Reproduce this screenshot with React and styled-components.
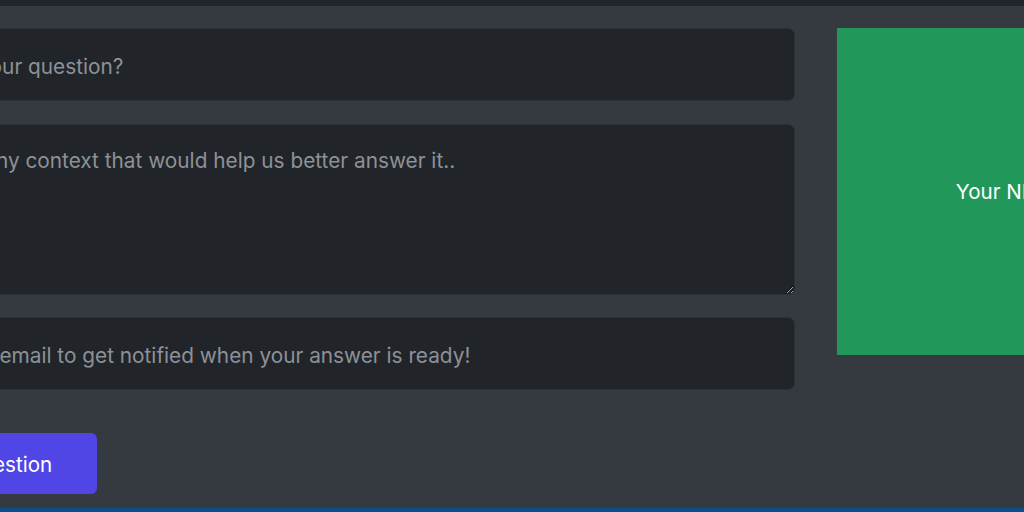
import styled, { createGlobalStyle } from "styled-components";

const GlobalStyle = createGlobalStyle`
  html, body {
    margin: 0;
    padding: 0;
    background: #343a40;
    overflow: hidden;
    font-family: Inter, "Noto Sans", sans-serif;
  }
`;

const Page = styled.div`
  width: 1024px;
  height: 512px;
  display: flex;
  flex-direction: column;
  background: #343a40;
`;

const TopBar = styled.div`
  height: 6px;
  background: #212529;
  flex-shrink: 0;
`;

const Main = styled.main`
  flex: 1;
  display: flex;
  gap: 42px;
  padding-top: 22px;
  /* page is scrolled sideways: the form starts left of the view */
  margin-left: -117px;
`;

const Form = styled.form`
  width: 912px;
  flex-shrink: 0;
  display: flex;
  flex-direction: column;
`;

const field = `
  box-sizing: border-box;
  width: 100%;
  background: #212529;
  border: 1px solid #2b3035;
  border-radius: 7px;
  color: #dee2e6;
  font-family: Inter, "Noto Sans", sans-serif;
  font-size: 20.8px;
  line-height: 1.5;
  padding: 0 20px;
  outline: none;
  &::placeholder {
    color: #8d9198;
  }
`;

const Input = styled.input`
  ${field}
  height: 73px;
  padding-top: 3px;
  margin-bottom: ${(p) => p.$gap}px;
`;

const TextArea = styled.textarea`
  ${field}
  display: block;
  height: 171px;
  padding-top: 20px;
  resize: vertical;
  margin-bottom: 22px;
`;

const SubmitButton = styled.button`
  align-self: flex-start;
  height: 61px;
  padding: 2px 45px 0 40px;
  border: 0;
  border-radius: 6px;
  background: #4f46e5;
  color: #fff;
  font-family: Inter, "Noto Sans", sans-serif;
  font-size: 20.6px;
  cursor: pointer;
`;

const Preview = styled.div`
  width: 329px;
  height: 327px;
  flex-shrink: 0;
  background: #21985a;
  color: #fff;
  display: flex;
  align-items: center;
  justify-content: center;
  font-size: 20.6px;
`;

const Footer = styled.footer`
  height: 4px;
  background: #0a4f8c;
  flex-shrink: 0;
`;

export default function App() {
  return (
    <Page>
      <GlobalStyle />
      <TopBar />
      <Main>
        <Form onSubmit={(e) => e.preventDefault()}>
          <Input $gap={23} placeholder="What's your question?" />
          <TextArea placeholder="Provide any context that would help us better answer it.." />
          <Input $gap={43} placeholder="Add your email to get notified when your answer is ready!" />
          <SubmitButton type="submit">Ask Question</SubmitButton>
        </Form>
        <Preview>Your NFT</Preview>
      </Main>
      <Footer />
    </Page>
  );
}
